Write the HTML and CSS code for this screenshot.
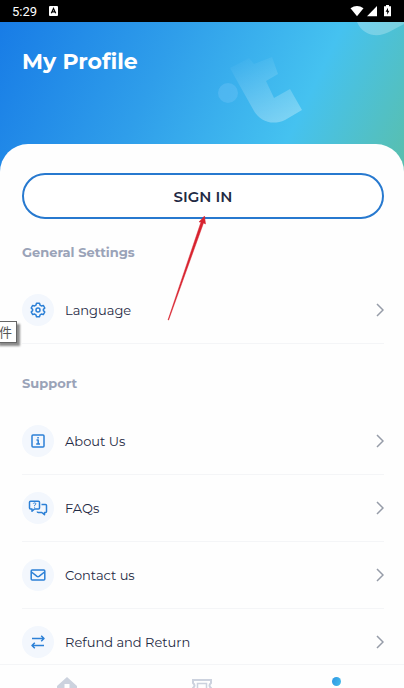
FILE: index.html
```html
<!DOCTYPE html>
<html lang="en">
<head>
    <meta charset="UTF-8">
    <meta name="viewport" content="width=device-width, initial-scale=1">
    <title>My Profile</title>
    <link rel="stylesheet" href="styles.css">
</head>
<body>
    <div class="app">
        <div class="status-bar">
            <span class="status-time">5:29</span>
            <svg class="status-badge" width="9" height="10" viewBox="0 0 9 10">
                <rect width="9" height="10" rx="1" fill="#fff"/>
                <path d="M2.3 7.3L4.5 2.5L6.7 7.3M3.2 5.8H5.8" fill="none" stroke="#000" stroke-width="1.2"/>
            </svg>
            <svg class="status-icons" width="42" height="12" viewBox="0 0 42 12">
                <path d="M0.5 3.2Q7 -1.2 13.5 3.2L7 11.2Z" fill="#fff"/>
                <path d="M27 1V11.2H17Z" fill="#fff"/>
                <path d="M35 1.2H36V0H39V1.2H41V11.3H34V1.2Z" fill="#fff"/>
                <path d="M38 2.800L35.600 6.800H37.200V9.700L39.400 5.800H38Z" fill="#000"/>
            </svg>
        </div>

        <header class="header">
            <h1>My Profile</h1>
            <svg class="header-art" width="190" height="122" viewBox="0 0 190 122">
                <defs>
                    <linearGradient id="artFade" x1="0.25" y1="0" x2="0.65" y2="1">
                        <stop offset="0" stop-color="#fff" stop-opacity="0.02"/>
                        <stop offset="1" stop-color="#fff" stop-opacity="0.3"/>
                    </linearGradient>
                </defs>
                <circle cx="14" cy="71" r="10" fill="#6fc3f8" fill-opacity="0.4"/>
                <path d="M16 46L35 36L40 42L58 35L64 52L52 59L60 76L76 67L88 88L71 98C58 104 46 99 40 89L22 57Z" fill="url(#artFade)"/>
                <path d="M143 0C149 14 164 16 175 10L190 2V0Z" fill="#fff" fill-opacity="0.25"/>
            </svg>
        </header>

        <main class="sheet">
            <button type="button" class="sign-in">SIGN IN</button>

            <h2>General Settings</h2>
            <nav class="menu" aria-label="General Settings">
                <a href="#language" class="menu-item">
                    <span class="menu-icon">
                        <svg width="16" height="16" viewBox="0 0 16 16">
                            <path d="M6.5 1.2H9.5L10.1 3.2L11.3 3.9L13.3 3.4L14.8 6L13.4 7.4V8.6L14.8 10L13.3 12.6L11.3 12.1L10.1 12.8L9.5 14.8H6.5L5.9 12.8L4.7 12.1L2.7 12.6L1.2 10L2.6 8.6V7.4L1.2 6L2.7 3.4L4.7 3.9L5.9 3.2Z"/>
                            <circle cx="8" cy="8" r="2"/>
                        </svg>
                    </span>
                    <span class="menu-label">Language</span>
                    <svg class="chevron" width="8" height="14" viewBox="0 0 8 14"><path d="M1 1L7 7L1 13"/></svg>
                </a>
            </nav>

            <h2 class="support-title">Support</h2>
            <nav class="menu" aria-label="Support">
                <a href="#about" class="menu-item">
                    <span class="menu-icon">
                        <svg width="16" height="16" viewBox="0 0 16 16">
                            <rect x="2" y="2" width="12" height="12" rx="1"/>
                            <path d="M6.5 7H8.2V11M6.2 11H10M7.3 4.7H8.8"/>
                        </svg>
                    </span>
                    <span class="menu-label">About Us</span>
                    <svg class="chevron" width="8" height="14" viewBox="0 0 8 14"><path d="M1 1L7 7L1 13"/></svg>
                </a>
                <a href="#faqs" class="menu-item">
                    <span class="menu-icon">
                        <svg width="20" height="16" viewBox="0 0 20 16">
                            <path d="M2.5 1.2H10.5Q11.5 1.2 11.5 2.2V8Q11.5 9 10.5 9H6.5L4 11.2V9H2.5Q1.5 9 1.5 8V2.2Q1.5 1.2 2.5 1.2Z"/>
                            <path d="M13.5 4.5H17.5Q18.5 4.5 18.5 5.5V11.5Q18.5 12.5 17.5 12.5H16.5V14.7L13.8 12.5H10.3Q9.3 12.5 9.3 11.5"/>
                            <path class="thin" d="M5.2 3.7Q5.5 2.9 6.6 2.9Q7.9 2.9 7.9 3.9Q7.9 4.6 6.6 5.2V6M6.6 6.8V7.7"/>
                        </svg>
                    </span>
                    <span class="menu-label">FAQs</span>
                    <svg class="chevron" width="8" height="14" viewBox="0 0 8 14"><path d="M1 1L7 7L1 13"/></svg>
                </a>
                <a href="#contact" class="menu-item">
                    <span class="menu-icon">
                        <svg width="16" height="16" viewBox="0 0 16 16">
                            <rect x="1.2" y="3" width="13.6" height="10" rx="1"/>
                            <path d="M1.5 5L7 9.4Q8 10 9 9.4L14.5 5"/>
                        </svg>
                    </span>
                    <span class="menu-label">Contact us</span>
                    <svg class="chevron" width="8" height="14" viewBox="0 0 8 14"><path d="M1 1L7 7L1 13"/></svg>
                </a>
                <a href="#refund" class="menu-item">
                    <span class="menu-icon">
                        <svg width="16" height="16" viewBox="0 0 16 16">
                            <path d="M2 4.5H14M11.2 1.7L14 4.5L11.2 7.3M14 11.5H2M4.8 8.7L2 11.5L4.8 14.3"/>
                        </svg>
                    </span>
                    <span class="menu-label">Refund and Return</span>
                    <svg class="chevron" width="8" height="14" viewBox="0 0 8 14"><path d="M1 1L7 7L1 13"/></svg>
                </a>
            </nav>
        </main>

        <nav class="tab-bar" aria-label="Main">
            <a href="#home" class="tab" aria-label="Home">
                <svg width="22" height="20" viewBox="0 0 22 20">
                    <path d="M11 0L21 9V11H18V20H4V11H1V9ZM8.5 7V14H13.5V7Z" fill="#ccd2de" fill-rule="evenodd"/>
                </svg>
            </a>
            <a href="#tickets" class="tab" aria-label="Tickets">
                <svg width="22" height="18" viewBox="0 0 22 18">
                    <path d="M2 3H20V6Q17 8.500 20 11V15H2V11Q5 8.500 2 6Z" fill="none" stroke="#ccd2de" stroke-width="2"/>
                    <path d="M6.500 12V6.500H15.500V12" fill="none" stroke="#ccd2de" stroke-width="1.500"/>
                </svg>
            </a>
            <a href="#profile" class="tab" aria-label="Profile">
                <span class="tab-dot"></span>
            </a>
        </nav>

        <svg class="pointer" width="42" height="106" viewBox="0 0 42 106">
            <path d="M2 105L35 7L33 7L38.500 1L39.500 9L37.500 8L2.600 105Z" fill="#d8232f" stroke="#d8232f" stroke-width="0.500"/>
        </svg>
        <span class="tooltip">件</span>
    </div>
</body>
</html>
```
FILE: styles.css
```css
* {
    box-sizing: border-box;
}
body {
    margin: 0;
    font-family: Montserrat, Inter, "Noto Sans CJK SC", sans-serif;
    color: #1f2a44;
    background: #fefefe;
}
.app {
    position: relative;
    display: flex;
    flex-direction: column;
    height: 100vh;
    overflow: hidden;
}

/* status bar */
.status-bar {
    display: flex;
    flex: none;
    align-items: center;
    height: 22px;
    padding: 0 12px;
    background: #000;
    color: #fff;
    font-family: Roboto, sans-serif;
    font-size: 13px;
    font-weight: 400;
}
.status-badge {
    margin-left: 12px;
}
.status-icons {
    margin-left: auto;
}

/* header */
.header {
    position: relative;
    flex: none;
    height: 154px;
    padding: 26px 22px;
    background: linear-gradient(116deg, #187ce6 0%, #2f9eea 38%, #45c2f0 72%, #58bfb0 98%);
}
h1 {
    margin: 0;
    font-size: 22px;
    line-height: 28px;
    font-weight: 700;
    color: #fff;
}
.header-art {
    position: absolute;
    top: 0;
    right: 0;
}

/* content */
.sheet {
    position: relative;
    flex: 1;
    min-height: 0;
    margin-top: -32px;
    padding: 29px 20px 0 22px;
    border-radius: 28px 28px 0 0;
    background: #fefefe;
    overflow: hidden;
}
.sign-in {
    display: block;
    width: 100%;
    height: 46px;
    border: 2px solid #2779cf;
    border-radius: 23px;
    background: #fff;
    color: #1f2a44;
    font-family: inherit;
    font-size: 15px;
    font-weight: 600;
    cursor: pointer;
}
h2 {
    margin: 23px 0 15px;
    font-size: 13px;
    line-height: 20px;
    font-weight: 700;
    color: #9aa3b8;
}
.support-title {
    margin-top: 29px;
}
.menu-item {
    display: flex;
    align-items: center;
    height: 67px;
    border-bottom: 1px solid #f4f5f7;
    color: #1f2a44;
    font-size: 13px;
    text-decoration: none;
}
.menu-icon {
    display: flex;
    align-items: center;
    justify-content: center;
    width: 32px;
    height: 32px;
    margin-right: 11px;
    border-radius: 50%;
    background: #f3f7fd;
}
.menu-icon svg {
    fill: none;
    stroke: #2c80d6;
    stroke-width: 1.5;
    stroke-linejoin: round;
}
.menu-icon .thin {
    stroke-width: 1;
}
.chevron {
    margin-left: auto;
    fill: none;
    stroke: #969ca8;
    stroke-width: 1.5;
}

/* bottom tabs */
.tab-bar {
    display: flex;
    flex: none;
    height: 24px;
    border-top: 1px solid #f4f5f7;
    background: #fefefe;
    overflow: hidden;
}
.tab {
    display: flex;
    flex: 1;
    align-items: flex-start;
    justify-content: center;
    padding-top: 12px;
}
.tab-dot {
    width: 9px;
    height: 9px;
    border-radius: 50%;
    background: linear-gradient(114deg, #2f96e4, #45bdea);
}

/* overlays */
.pointer {
    position: absolute;
    top: 215px;
    left: 166px;
    pointer-events: none;
}
.tooltip {
    position: absolute;
    top: 321px;
    left: -4px;
    padding: 0 4px 0 2px;
    border: 1px solid #666;
    background: #fff;
    box-shadow: 3px 3px 2px rgba(0, 0, 0, 0.45);
    color: #555;
    font-family: "Noto Sans CJK SC", sans-serif;
    font-size: 13px;
    line-height: 20px;
}
```
